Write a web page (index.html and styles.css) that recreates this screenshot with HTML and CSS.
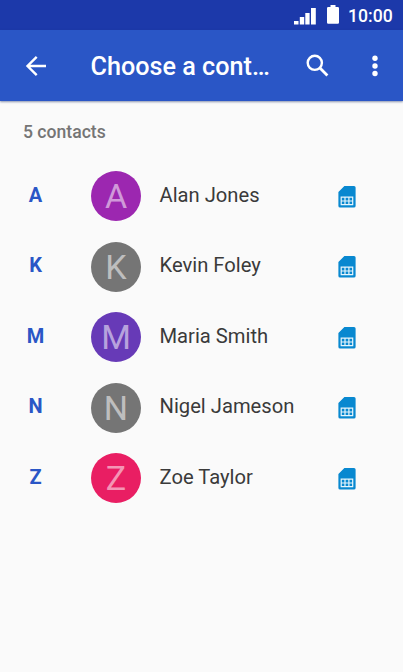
FILE: index.html
```
<!DOCTYPE html>
<html lang="en">
<head>
<meta charset="utf-8">
<title>Choose a contact</title>
<link rel="stylesheet" href="styles.css">
</head>
<body>
<svg class="defs" width="0" height="0" aria-hidden="true">
  <symbol id="sim" viewBox="0 0 18 22">
    <path fill="#0888d0" d="M6.4 0H16a1.6 1.6 0 0 1 1.6 1.6v18.3a1.7 1.7 0 0 1-1.7 1.7H2.1A1.7 1.7 0 0 1 .4 19.900V6z"/>
    <path fill="none" stroke="#e6f5fc" stroke-width="1.2" d="M3.200 11.200H14.700V18.700H3.200zM3.200 15H14.700M7 11.200V18.700M10.900 11.200V18.700"/>
  </symbol>
</svg>
<div class="status">
  <svg class="signal" width="22" height="17" viewBox="0 0 22 17"><path fill="#fff" d="M0 13h4.500v3.500H0zM5.800 9h4.400v7.500H5.800z"/><path fill="#fff" d="M11.300 5h4.300v11.500h-4.300zM17 0h4.800v16.500H17z"/></svg>
  <svg class="battery" width="12" height="19" viewBox="0 0 12 19"><path fill="#fff" d="M3.500 0h5v2h2.300q1.200 0 1.200 1.200v14.300q0 1.200-1.200 1.200H1.200Q0 18.700 0 17.500V3.200Q0 2 1.200 2h2.300z"/></svg>
  <span class="time">10:00</span>
</div>
<header class="appbar">
  <svg class="back" width="22" height="22" viewBox="0 0 22 22"><path fill="none" stroke="#fff" stroke-width="2.400" d="M21 11H3M11.700 1.800L2.500 11l9.200 9.200"/></svg>
  <h1 class="title">Choose a contact</h1>
  <svg class="search" width="24" height="24" viewBox="0 0 24 24"><circle cx="8.800" cy="8.800" r="7.100" fill="none" stroke="#fff" stroke-width="2.400"/><path stroke="#fff" stroke-width="2.800" d="M13.700 13.700l7.700 7.700"/></svg>
  <svg class="more" width="6" height="22" viewBox="0 0 6 22"><g fill="#fff"><circle cx="3" cy="3.300" r="2.700"/><circle cx="3" cy="11" r="2.700"/><circle cx="3" cy="18.500" r="2.700"/></g></svg>
</header>
<main>
  <p class="count">5 contacts</p>
  <ul class="list">
    <li class="row"><span class="section">A</span><span class="avatar purple">A</span><span class="name">Alan Jones</span><svg class="sim"><use href="#sim"/></svg></li>
    <li class="row"><span class="section">K</span><span class="avatar gray">K</span><span class="name">Kevin Foley</span><svg class="sim"><use href="#sim"/></svg></li>
    <li class="row"><span class="section">M</span><span class="avatar violet">M</span><span class="name">Maria Smith</span><svg class="sim"><use href="#sim"/></svg></li>
    <li class="row"><span class="section">N</span><span class="avatar gray">N</span><span class="name">Nigel Jameson</span><svg class="sim"><use href="#sim"/></svg></li>
    <li class="row"><span class="section">Z</span><span class="avatar pink">Z</span><span class="name">Zoe Taylor</span><svg class="sim"><use href="#sim"/></svg></li>
  </ul>
</main>
</body>
</html>
```
FILE: styles.css
```
* { box-sizing: border-box; margin: 0; padding: 0; }
body {
  width: 403px;
  height: 672px;
  overflow: hidden;
  background: #fafafa;
  font-family: Roboto, sans-serif;
}
svg { display: block; flex: none; }
.defs { display: none; }
.status {
  display: flex;
  height: 30px;
  padding-left: 294px;
  background: #1c39aa;
  color: #fff;
}
.signal { margin-top: 8px; }
.battery { margin: 5px 9px 0 11px; }
.time { font-size: 17.600px; font-weight: 500; line-height: 32px; }
.appbar {
  display: flex;
  align-items: center;
  height: 70.500px;
  padding: 1px 0 0 24.500px;
  background: #2a56c6;
  box-shadow: 0 1px 2px rgba(42, 60, 110, .55);
  color: #fff;
}
.title {
  width: 183px;
  margin-left: 44px;
  padding-top: 3px;
  overflow: hidden;
  font-size: 25.200px;
  font-weight: 500;
  line-height: 36px;
  text-overflow: ellipsis;
  white-space: nowrap;
}
.search { margin-left: 32.500px; }
.more { margin-left: 42px; }
.count {
  padding: 21px 0 0 23px;
  color: #757575;
  font-size: 17.600px;
  font-weight: 500;
  line-height: 20px;
}
.list { padding-top: 19.500px; list-style: none; }
.row { display: flex; align-items: center; height: 70.500px; }
.section {
  width: 71px;
  padding-bottom: 3px;
  color: #2a56c6;
  font-size: 20px;
  font-weight: 700;
  line-height: 24px;
  text-align: center;
}
.avatar {
  width: 50px;
  height: 50px;
  margin-left: 20px;
  border-radius: 50%;
  color: rgba(255, 255, 255, .54);
  font-size: 34px;
  line-height: 51px;
  text-align: center;
}
.purple { background: #9c27b0; }
.gray { background: #757575; }
.violet { background: #673ab7; }
.pink { background: #e91e63; }
.name {
  width: 178px;
  margin-left: 18.500px;
  padding-bottom: 3px;
  color: #3a3a3a;
  font-size: 20.200px;
  line-height: 24px;
}
.sim { width: 18px; height: 22px; margin-top: 1px; }
```
